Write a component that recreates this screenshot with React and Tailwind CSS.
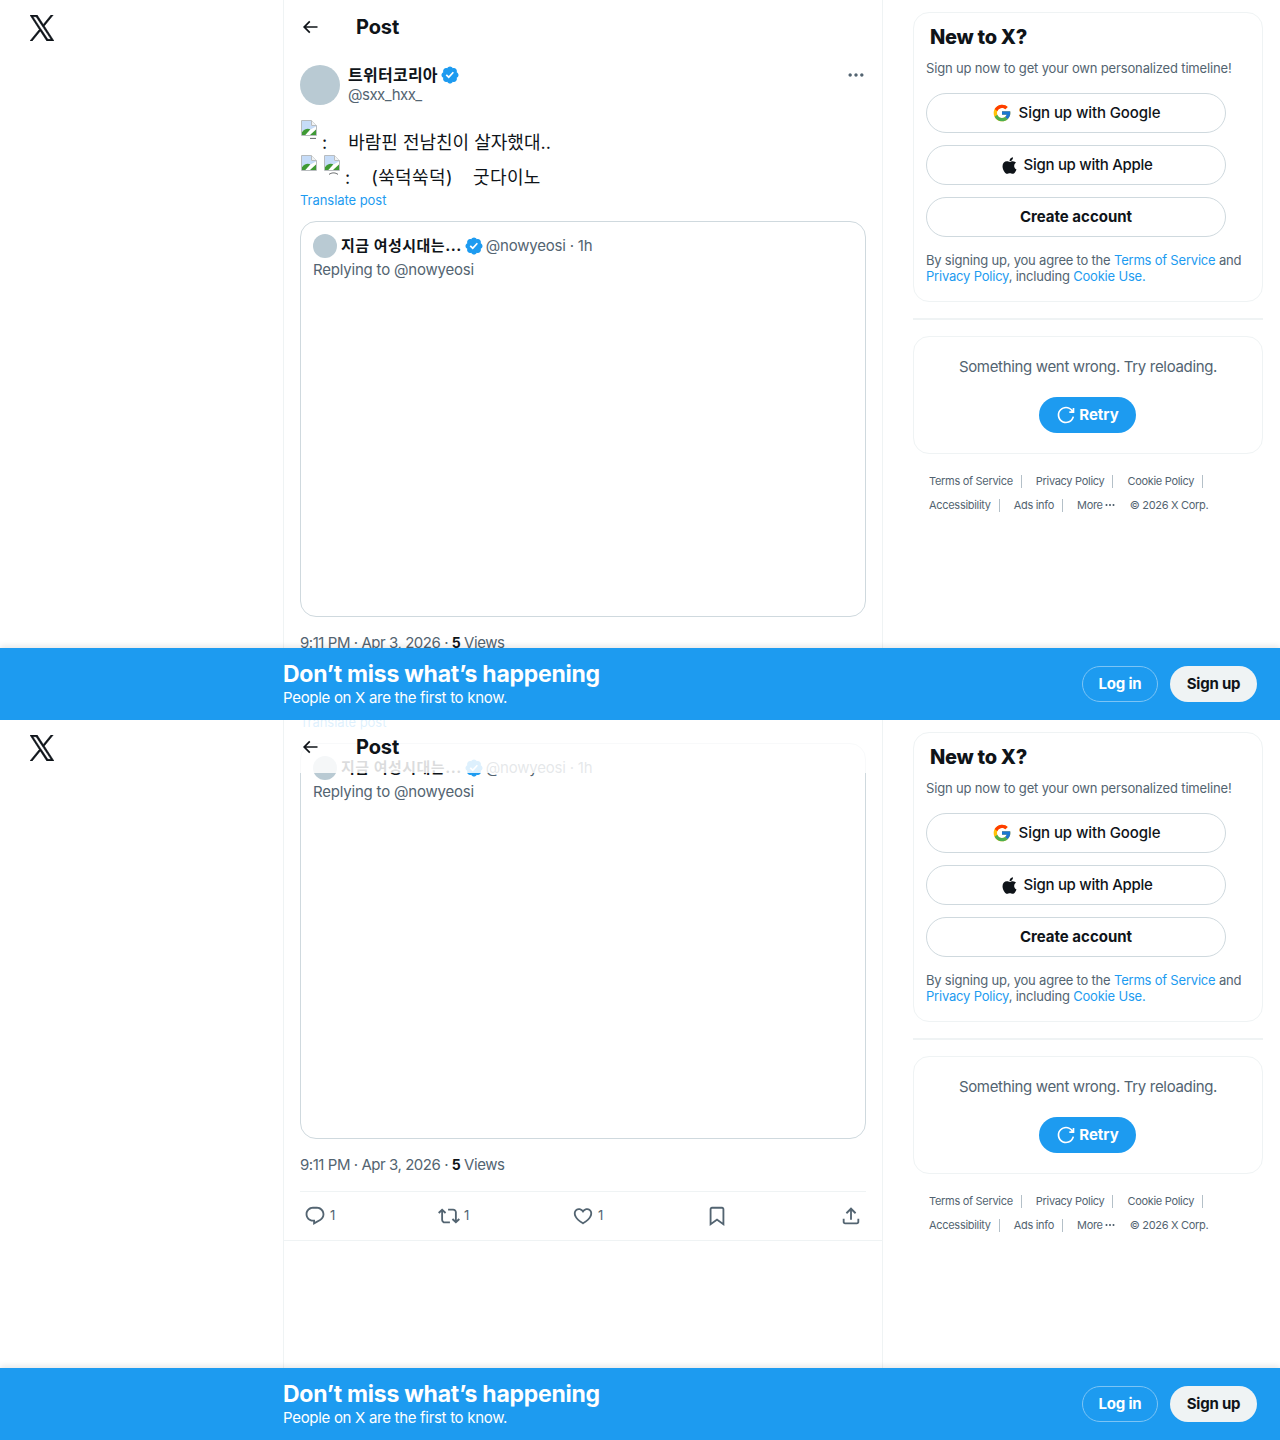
import React from "react";
import { FcGoogle } from "react-icons/fc";
import { FaApple } from "react-icons/fa";

const paths = {
  back: "M7.414 13l5.043 5.04-1.414 1.42L3.586 12l7.457-7.46 1.414 1.42L7.414 11H21v2H7.414z",
  badge:
    "M22.25 12c0-1.43-.88-2.67-2.19-3.34.46-1.39.2-2.9-.81-3.91s-2.52-1.27-3.91-.81c-.66-1.31-1.91-2.19-3.34-2.19s-2.67.88-3.33 2.19c-1.4-.46-2.91-.2-3.92.81s-1.26 2.52-.8 3.91c-1.31.67-2.2 1.91-2.2 3.34s.89 2.67 2.2 3.34c-.46 1.39-.21 2.9.8 3.91s2.52 1.26 3.91.81c.67 1.31 1.91 2.19 3.34 2.19s2.68-.88 3.34-2.19c1.39.45 2.9.2 3.91-.81s1.27-2.52.81-3.91c1.31-.67 2.19-1.91 2.19-3.34zm-11.71 4.2L6.8 12.46l1.41-1.42 2.26 2.26 4.8-5.23 1.47 1.36-6.2 6.77z",
  more: "M3 12c0-1.1.9-2 2-2s2 .9 2 2-.9 2-2 2-2-.9-2-2zm9 2c1.1 0 2-.9 2-2s-.9-2-2-2-2 .9-2 2 .9 2 2 2zm7 0c1.1 0 2-.9 2-2s-.9-2-2-2-2 .9-2 2 .9 2 2 2z",
  reply:
    "M1.751 10c0-4.42 3.584-8 8.005-8h4.366c4.49 0 8.129 3.64 8.129 8.13 0 2.96-1.607 5.68-4.196 7.11l-8.054 4.46v-3.69h-.067c-4.49.1-8.183-3.51-8.183-8.01zm8.005-6c-3.317 0-6.005 2.69-6.005 6 0 3.37 2.77 6.08 6.138 6.01l.351-.01h1.761v2.3l5.087-2.81c1.951-1.08 3.163-3.13 3.163-5.36 0-3.39-2.744-6.13-6.129-6.13H9.756z",
  retweet:
    "M4.5 3.88l4.432 4.14-1.364 1.46L5.5 7.55V16c0 1.1.896 2 2 2H13v2H7.5c-2.209 0-4-1.79-4-4V7.55L1.432 9.48.068 8.02 4.5 3.88zM16.5 6H11V4h5.5c2.209 0 4 1.79 4 4v8.45l2.068-1.93 1.364 1.46-4.432 4.14-4.432-4.14 1.364-1.46 2.068 1.93V8c0-1.1-.896-2-2-2z",
  like: "M16.697 5.5c-1.222-.06-2.679.51-3.89 2.16l-.805 1.09-.806-1.09C9.984 6.01 8.526 5.44 7.304 5.5c-1.243.07-2.349.78-2.91 1.91-.552 1.12-.633 2.78.479 4.82 1.074 1.97 3.257 4.27 7.129 6.61 3.87-2.34 6.052-4.64 7.126-6.61 1.111-2.04 1.03-3.7.477-4.82-.561-1.13-1.666-1.84-2.908-1.91zm4.187 7.69c-1.351 2.48-4.001 5.12-8.379 7.67l-.503.3-.504-.3c-4.379-2.55-7.029-5.19-8.382-7.67-1.36-2.5-1.41-4.86-.514-6.67.887-1.79 2.647-2.91 4.601-3.01 1.651-.09 3.368.56 4.798 2.01 1.429-1.45 3.146-2.1 4.796-2.01 1.954.1 3.714 1.22 4.601 3.01.896 1.81.846 4.17-.514 6.67z",
  bookmark:
    "M4 4.5C4 3.12 5.119 2 6.5 2h11C18.881 2 20 3.12 20 4.5v18.44l-8-5.71-8 5.71V4.5zM6.5 4c-.276 0-.5.22-.5.5v14.56l6-4.29 6 4.29V4.5c0-.28-.224-.5-.5-.5h-11z",
  share:
    "M12 2.59l5.7 5.7-1.41 1.42L13 6.41V16h-2V6.41l-3.3 3.3-1.41-1.42L12 2.59zM21 15l-.02 3.51c0 1.38-1.12 2.49-2.5 2.49H5.5C4.11 21 3 19.88 3 18.5V15h2v3.5c0 .28.22.5.5.5h12.98c.28 0 .5-.22.5-.5L19 15h2z",
  retry:
    "M12 4c-4.418 0-8 3.58-8 8s3.582 8 8 8c3.806 0 6.993-2.66 7.802-6.22l1.95.44C20.742 18.67 16.76 22 12 22 6.477 22 2 17.52 2 12S6.477 2 12 2c3.272 0 6.176 1.57 8 4V3.5h2v6h-6v-2h2.616C17.175 5.39 14.749 4 12 4z",
};

function Icon({ name, className }) {
  return (
    <svg viewBox="0 0 24 24" fill="currentColor" className={className}>
      <path d={paths[name]} />
    </svg>
  );
}

function XLogo() {
  return (
    <svg
      viewBox="0 0 24 24"
      preserveAspectRatio="none"
      fill="#0f1419"
      stroke="#0f1419"
      strokeWidth="0.6"
      className="w-[24px] h-[26px]"
    >
      <path d="M14.258 10.152L23.176 0h-2.113l-7.747 8.813L7.133 0H0l9.352 13.328L0 23.973h2.113l8.176-9.309 6.531 9.309h7.133zm-2.895 3.293l-.949-1.328L2.875 1.56h3.246l6.086 8.523.945 1.328 7.91 11.078h-3.246zm0 0" />
    </svg>
  );
}

// chrome's broken image placeholder, the clipped alt text shows as a small mark under it
function BrokenImg({ mark, className = "" }) {
  return (
    <svg viewBox="0 0 16 24" className={`w-4 h-6 shrink-0 ${className}`}>
      <path d="M0.5 0.5H10.5L15.5 5.5V15.5H0.5z" fill="#fff" stroke="#b8bcbf" />
      <path d="M10.5 0.5V5.5H15.5" fill="#f1f3f4" stroke="#b8bcbf" />
      <path d="M1 1H10V6H15V8L7 10L1 11z" fill="#c6dcf8" />
      <path d="M1 15V12C4 8.5 7 8 9.5 9.5L4.5 15z" fill="#3f9a35" />
      <path d="M9.5 9.5L15 6.5V9.5L9 15H4.5z" fill="#fff" />
      <path d="M9 15L15 9.5V15z" fill="#3f9a35" />
      {mark === "dash" && <path d="M9 18.4H15" fill="none" stroke="#3c4043" strokeWidth="0.8" />}
      {mark === "arc" && <path d="M5 19.4C8 17.4 11 17.4 14 19.4" fill="none" stroke="#3c4043" strokeWidth="0.8" />}
    </svg>
  );
}

function Avatar({ className }) {
  return <div className={`rounded-full bg-[#b9cad3] shrink-0 ${className}`} />;
}

function PostBody() {
  const actions = [
    { name: "reply", count: "1" },
    { name: "retweet", count: "1" },
    { name: "like", count: "1" },
    { name: "bookmark" },
  ];

  return (
    <div className="px-4 pt-[65px] pb-[1px] border-b border-[#eff3f4]">
      <div className="flex items-start gap-2">
        <Avatar className="w-10 h-10" />
        <div className="flex-1">
          <div className="flex items-center gap-[2px] h-[20px] text-[16px] leading-[20px] font-bold text-[#0f1419] tracking-[0.25px]">
            <span>트위터코리아</span>
            <Icon name="badge" className="w-5 h-5 text-[#1d9bf0]" />
          </div>
          <div className="text-[15px] leading-[20px] text-[#536471] tracking-[-0.5px]">@sxx_hxx_</div>
        </div>
        <Icon name="more" className="w-5 h-5 mr-0 text-[#536471]" />
      </div>

      <div className="mt-[15px] text-[18px] leading-[24px] text-[#0f1419]">
        <div className="flex items-start h-[35px] pl-[1px]">
          <BrokenImg mark="dash" />
          <span className="ml-[5px] mt-[11px]">:</span>
          <span className="ml-[21px] mt-[11px]">바람핀 전남친이 살자했대..</span>
        </div>
        <div className="flex items-start h-[35px] pl-[1px]">
          <BrokenImg />
          <BrokenImg mark="arc" className="ml-[7px]" />
          <span className="ml-[5px] mt-[11px]">:</span>
          <span className="ml-[21px] mt-[11px] tracking-[0.4px]">(쑥덕쑥덕)</span>
          <span className="ml-[20px] mt-[11px] tracking-[0.4px]">굿다이노</span>
        </div>
      </div>

      <div className="mt-[2px] text-[13px] leading-[16px] text-[#1d9bf0] tracking-[-0.05px]">Translate post</div>

      <div className="mt-[13px] h-[396px] rounded-2xl border border-[#cfd9de] px-3 pt-[12px]">
        <div className="flex items-center h-6 text-[15px] leading-[20px]">
          <Avatar className="w-6 h-6" />
          <span className="ml-1 font-bold text-[#0f1419] tracking-[0.5px]">지금 여성시대는...</span>
          <Icon name="badge" className="w-5 h-5 ml-[2px] text-[#1d9bf0]" />
          <span className="ml-[2px] text-[#536471] tracking-[-0.2px]">@nowyeosi · 1h</span>
        </div>
        <div className="mt-[2px] text-[15px] leading-[20px] text-[#536471] tracking-[-0.2px]">
          Replying to @nowyeosi
        </div>
      </div>

      <div className="mt-4 text-[15px] leading-[20px] text-[#536471] tracking-[-0.45px]">
        9:11 PM · Apr 3, 2026 · <span className="font-bold text-[#0f1419] text-[14px]">5</span> Views
      </div>

      <div className="mt-4 border-t border-[#eff3f4] flex items-center h-[48px] px-1 text-[#536471]">
        {actions.map((a) => (
          <div key={a.name} className="w-[134px] flex items-center gap-1">
            <Icon name={a.name} className="w-[22px] h-[22px]" />
            {a.count && <span className="text-[13px]">{a.count}</span>}
          </div>
        ))}
        <Icon name="share" className="w-[22px] h-[22px]" />
      </div>
    </div>
  );
}

function SignupButton({ icon, children, bold, gap = "gap-[7px]" }) {
  return (
    <div
      className={`w-[300px] h-10 rounded-full border border-[#cfd9de] flex items-center justify-center ${gap} text-[15px] text-[#0f1419] ${bold ? "font-bold" : "font-medium"}`}
    >
      {icon}
      {children}
    </div>
  );
}

function Sidebar() {
  const footerRow = (items) =>
    items.map((t) => (
      <span key={t} className="flex items-center">
        {t}
        <span className="ml-2 mr-[14px] w-px h-[13px] bg-[#b4c0c8]" />
      </span>
    ));

  return (
    <div className="w-[350px] ml-[30px] pt-3">
      <div className="rounded-2xl border border-[#eff3f4] h-[290px] pl-3 pt-3">
        <div className="pl-1 text-[20px] leading-[24px] font-extrabold text-[#0f1419] tracking-[-0.3px]">
          New to X?
        </div>
        <div className="mt-[11px] text-[13px] leading-[16px] text-[#536471] tracking-[-0.16px]">
          Sign up now to get your own personalized timeline!
        </div>
        <div className="mt-[17px] flex flex-col gap-3">
          <SignupButton icon={<FcGoogle className="w-5 h-5" />}>
            <span className="tracking-[-0.1px]">Sign up with Google</span>
          </SignupButton>
          <SignupButton icon={<FaApple className="w-[19px] h-[19px]" />} gap="gap-[5px]">
            <span className="tracking-[-0.3px]">Sign up with Apple</span>
          </SignupButton>
          <SignupButton bold>Create account</SignupButton>
        </div>
        <div className="mt-[15px] text-[13px] leading-[16px] text-[#536471] tracking-[-0.2px]">
          By signing up, you agree to the <span className="text-[#1d9bf0]">Terms of Service</span> and
          <br />
          <span className="text-[#1d9bf0]">Privacy Policy</span>, including{" "}
          <span className="text-[#1d9bf0]">Cookie Use.</span>
        </div>
      </div>

      <div className="mt-4 h-[2px] bg-[#eff3f4]" />

      <div className="mt-4 rounded-2xl border border-[#eff3f4] h-[118px] flex flex-col items-center pt-5">
        <div className="text-[15px] leading-[20px] text-[#536471] tracking-[-0.33px]">
          Something went wrong. Try reloading.
        </div>
        <div className="mt-5 -ml-[1px] w-[97px] h-9 rounded-full bg-[#1d9bf0] text-white font-bold text-[15px] flex items-center justify-center gap-[3px]">
          <Icon name="retry" className="w-5 h-5" />
          Retry
        </div>
      </div>

      <div className="mt-[15px] pl-4 text-[11px] text-[#536471] tracking-[-0.3px]">
        <div className="flex items-center h-[24px]">
          {footerRow(["Terms of Service", "Privacy Policy", "Cookie Policy"])}
        </div>
        <div className="flex items-center h-[24px]">
          {footerRow(["Accessibility", "Ads info"])}
          <span className="flex items-center">
            More
            <Icon name="more" className="ml-[1px] w-3 h-3" />
          </span>
          <span className="ml-[14px]">© 2026 X Corp.</span>
        </div>
      </div>
    </div>
  );
}

function Banner() {
  return (
    <div className="absolute left-0 right-0 bottom-0 h-[72px] bg-[#1d9bf0] flex items-center pl-[283px] pr-[23px] text-white shadow-[0_-2px_6px_rgba(0,0,0,0.1)]">
      <div className="flex-1">
        <div className="text-[23px] leading-[28px] font-bold tracking-[-0.25px]">Don’t miss what’s happening</div>
        <div className="text-[15px] leading-[20px] tracking-[-0.3px]">People on X are the first to know.</div>
      </div>
      <div className="w-[76px] h-9 rounded-full border border-[#7cc4f5] flex items-center justify-center font-bold text-[15px] tracking-[-0.2px]">
        Log in
      </div>
      <div className="ml-3 w-[87px] h-9 rounded-full bg-[#eff3f4] text-[#0f1419] flex items-center justify-center font-bold text-[15px] tracking-[-0.2px]">
        Sign up
      </div>
    </div>
  );
}

function Frame({ scrolled }) {
  return (
    <div className="relative h-[720px] overflow-hidden flex bg-white">
      <div className="w-[284px] shrink-0 border-r border-[#eff3f4] pl-[30px] pt-[15px]">
        <XLogo />
      </div>

      <div className="relative w-[599px] shrink-0 border-r border-[#eff3f4] overflow-hidden">
        <div className={scrolled ? "-mt-[198px]" : ""}>
          <PostBody />
        </div>
        <div
          className={`absolute top-0 left-0 right-0 h-[53px] flex items-center pl-4 ${scrolled ? "bg-white/85" : "bg-white"}`}
        >
          <Icon name="back" className="w-5 h-5 text-[#0f1419]" />
          <div className="ml-[36px] text-[20px] font-bold text-[#0f1419] tracking-[-0.1px]">Post</div>
        </div>
      </div>

      <Sidebar />
      <Banner />
    </div>
  );
}

export default function App() {
  return (
    <div className="font-['Inter','Noto_Sans_CJK_KR',sans-serif]">
      <Frame />
      <Frame scrolled />
    </div>
  );
}
